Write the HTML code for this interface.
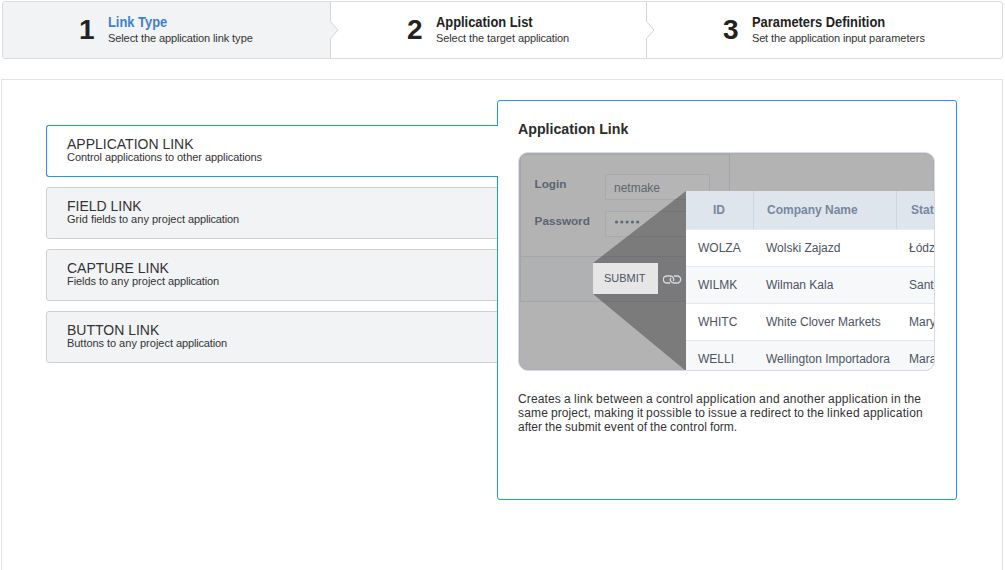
<!DOCTYPE html>
<html><head><meta charset="utf-8">
<style>
*{box-sizing:border-box;margin:0;padding:0}
html,body{width:1005px;height:570px;overflow:hidden;background:#fff;font-family:"Liberation Sans",sans-serif;color:#333}
.abs{position:absolute}
.t{position:absolute;white-space:nowrap;line-height:1}
#stepper{left:2px;top:1px;width:1001px;height:58px;border:1px solid #dcdcdc;border-radius:3px;overflow:hidden;background:#fff}
#s1bg{left:0;top:0;width:328px;height:56px;background:#f2f3f5}
.num{font-size:28px;font-weight:bold;color:#222}
.stt{font-size:14px;font-weight:bold;color:#222;transform:scaleX(0.92);transform-origin:0 0}
.sst{font-size:11px;color:#333}
#lower{left:1px;top:79px;width:1002px;height:520px;border:1px solid #e3e3e3}
.card{position:absolute;left:46px;width:456px;height:52px;border:1px solid #cfcfcf;border-radius:3px;background:#f2f3f5}
.card.act{width:452px;background:#fff;border-color:#2196f3;border-right:none;border-radius:3px 0 0 3px;z-index:3}
.ct{font-size:14px;color:#333}
.cs{font-size:11px;color:#333}
#panel{left:497px;top:100px;width:460px;height:400px;border:1px solid #2196f3;border-radius:3px;background:#fff;z-index:2}
#img{left:518px;top:152px;width:417px;height:219px;border-radius:10px;overflow:hidden;background:#b3b3b3;z-index:4;border:1px solid #d5dbe4}
.ilab{font-size:11.7px;font-weight:bold;color:#5a6473}
.inp{width:105px;height:26px;border:1px solid #a6aab0;background:#b5b5b6}
.th{font-size:12px;font-weight:bold;color:#77879e}
.td{font-size:12px;color:#4c5462}
.row{left:0;width:260px;height:37px;border-bottom:1px solid #e3e7ee}
#desc{left:518px;top:392px;width:420px;height:50px;font-size:12px;line-height:14px;color:#333;z-index:4}
#desc span{position:absolute;white-space:nowrap}
</style></head><body>
<!-- stepper -->
<div id="stepper" class="abs">
  <div id="s1bg" class="abs"></div>
  <svg class="abs" style="left:0;top:0" width="1001" height="58">
    <path d="M327.5 19.5 L335 28 L327.5 36.5 Z" fill="#f2f3f5"/>
    <path d="M327.5 0 V19.5 L335 28 L327.5 36.5 V58" fill="none" stroke="#d4d4d4" stroke-width="1"/>
    <path d="M643.5 0 V19.5 L651 28 L643.5 36.5 V58" fill="none" stroke="#d4d4d4" stroke-width="1"/>
  </svg>
  <div class="t num" style="left:76px;top:14px">1</div>
  <div class="t stt" style="left:105px;top:13px;color:#3f80d0">Link Type</div>
  <div class="t sst" style="left:105px;top:31px"><span style="position:absolute;left:0px;top:0;letter-spacing:-0.095px">Select</span><span style="position:absolute;left:33px;top:0;letter-spacing:-0.097px">the</span><span style="position:absolute;left:51px;top:0;letter-spacing:-0.145px">application</span><span style="position:absolute;left:105px;top:0;letter-spacing:-0.126px">link</span><span style="position:absolute;left:124px;top:0;letter-spacing:0.052px">type</span></div>
  <div class="t num" style="left:404px;top:14px">2</div>
  <div class="t stt" style="left:433px;top:13px">Application List</div>
  <div class="t sst" style="left:433px;top:31px"><span style="position:absolute;left:0px;top:0;letter-spacing:-0.095px">Select</span><span style="position:absolute;left:33px;top:0;letter-spacing:-0.097px">the</span><span style="position:absolute;left:51px;top:0;letter-spacing:-0.021px">target</span><span style="position:absolute;left:82px;top:0;letter-spacing:-0.145px">application</span></div>
  <div class="t num" style="left:720px;top:14px">3</div>
  <div class="t stt" style="left:749px;top:13px">Parameters Definition</div>
  <div class="t sst" style="left:749px;top:31px"><span style="position:absolute;left:0px;top:0;letter-spacing:-0.170px">Set</span><span style="position:absolute;left:19px;top:0;letter-spacing:-0.097px">the</span><span style="position:absolute;left:37px;top:0;letter-spacing:-0.145px">application</span><span style="position:absolute;left:91px;top:0;letter-spacing:-0.171px">input</span><span style="position:absolute;left:117px;top:0;letter-spacing:0.037px">parameters</span></div>
</div>

<div id="lower" class="abs"></div>

<div class="card act" style="top:125px">
  <div class="t ct" style="left:20px;top:11px">APPLICATION LINK</div>
  <div class="t cs" style="left:20px;top:26px"><span style="position:absolute;left:0px;top:0;letter-spacing:-0.066px">Control</span><span style="position:absolute;left:38px;top:0;letter-spacing:-0.091px">applications</span><span style="position:absolute;left:98px;top:0;letter-spacing:-0.087px">to</span><span style="position:absolute;left:110px;top:0;letter-spacing:-0.014px">other</span><span style="position:absolute;left:138px;top:0;letter-spacing:-0.091px">applications</span></div>
</div>
<div class="card" style="top:187px">
  <div class="t ct" style="left:20px;top:11px">FIELD LINK</div>
  <div class="t cs" style="left:20px;top:26px"><span style="position:absolute;left:0px;top:0;letter-spacing:0.055px">Grid</span><span style="position:absolute;left:24px;top:0;letter-spacing:-0.113px">fields</span><span style="position:absolute;left:52px;top:0;letter-spacing:-0.087px">to</span><span style="position:absolute;left:64px;top:0;letter-spacing:0.088px">any</span><span style="position:absolute;left:85px;top:0;letter-spacing:-0.002px">project</span><span style="position:absolute;left:121px;top:0;letter-spacing:-0.145px">application</span></div>
</div>
<div class="card" style="top:249px">
  <div class="t ct" style="left:20px;top:11px">CAPTURE LINK</div>
  <div class="t cs" style="left:20px;top:26px"><span style="position:absolute;left:0px;top:0;letter-spacing:-0.057px">Fields</span><span style="position:absolute;left:32px;top:0;letter-spacing:-0.087px">to</span><span style="position:absolute;left:44px;top:0;letter-spacing:0.088px">any</span><span style="position:absolute;left:65px;top:0;letter-spacing:-0.002px">project</span><span style="position:absolute;left:101px;top:0;letter-spacing:-0.145px">application</span></div>
</div>
<div class="card" style="top:311px">
  <div class="t ct" style="left:20px;top:11px">BUTTON LINK</div>
  <div class="t cs" style="left:20px;top:26px"><span style="position:absolute;left:0px;top:0;letter-spacing:-0.043px">Buttons</span><span style="position:absolute;left:40px;top:0;letter-spacing:-0.087px">to</span><span style="position:absolute;left:52px;top:0;letter-spacing:0.088px">any</span><span style="position:absolute;left:73px;top:0;letter-spacing:-0.002px">project</span><span style="position:absolute;left:109px;top:0;letter-spacing:-0.145px">application</span></div>
</div>

<div id="panel" class="abs">
  <div class="t" style="left:20px;top:20px;font-size:15.5px;font-weight:bold;color:#2b2b2b;transform:scaleX(0.915);transform-origin:0 0">Application Link</div>
</div>

<div id="img" class="abs">
  <div class="abs" style="left:0;top:0;width:415px;height:217px;border:1px solid #abadb1;border-radius:9px"></div>
  <div class="abs" style="left:1px;top:1px;width:210px;height:148px;border:1px solid #a3a7ad;background:#b3b3b3"></div>
  <div class="abs" style="left:1px;top:103px;width:210px;height:46px;border:1px solid #a3a7ad;background:#b0b1b3"></div>
  <div class="t ilab" style="left:15.6px;top:24.5px">Login</div>
  <div class="abs inp" style="left:86px;top:21px"></div>
  <div class="t" style="left:95px;top:29px;font-size:12px;color:#60656e">netmake</div>
  <div class="t ilab" style="left:15.6px;top:61.5px">Password</div>
  <div class="abs inp" style="left:86px;top:58px"></div>
  <svg class="abs" style="left:94.6px;top:65.6px" width="28" height="6"><circle cx="2.5" cy="3" r="1.55" fill="#5d6775"/><circle cx="7.8" cy="3" r="1.55" fill="#5d6775"/><circle cx="13.1" cy="3" r="1.55" fill="#5d6775"/><circle cx="18.4" cy="3" r="1.55" fill="#5d6775"/><circle cx="23.7" cy="3" r="1.55" fill="#5d6775"/></svg>
  <svg class="abs" style="left:0;top:0" width="416" height="218"><polygon points="74,110 167,38 167,218 74,141" fill="rgba(0,0,0,0.315)"/></svg>
  <div class="abs" style="left:74px;top:110px;width:65px;height:31px;background:#e6e6e6"></div>
  <div class="t" style="left:85px;top:120px;font-size:11px;color:#4b5563">SUBMIT</div>
  <svg class="abs" style="left:144px;top:121.5px" width="20" height="10"><path d="M7.2 8 H3.8 A3.5 3.5 0 0 1 3.8 1 H7.2 A3.5 3.5 0 0 1 10.23 6.25" fill="none" stroke="#d5dae1" stroke-width="1.3"/><path d="M10.8 1 H14.2 A3.5 3.5 0 0 1 14.2 8 H10.8 A3.5 3.5 0 0 1 7.77 2.75" fill="none" stroke="#d5dae1" stroke-width="1.3"/></svg>
  <div class="abs" id="tbl" style="left:167px;top:38px;width:260px;height:190px;background:#fff">
    <div class="abs" style="left:0;top:0;width:260px;height:39px;background:#dfe5ed;border-bottom:1px solid #e8ecf1"></div>
    <div class="abs" style="left:67px;top:0;width:1px;height:38px;background:#cdd5e0"></div>
    <div class="abs" style="left:210px;top:0;width:1px;height:38px;background:#cdd5e0"></div>
    <div class="t th" style="left:27px;top:13px">ID</div>
    <div class="t th" style="left:81px;top:13px">Company Name</div>
    <div class="t th" style="left:225px;top:13px">State</div>
    <div class="abs row" style="top:39px;background:#fff"></div>
    <div class="abs row" style="top:76px;background:#f7f8fa"></div>
    <div class="abs row" style="top:113px;background:#fff"></div>
    <div class="abs row" style="top:150px;background:#f7f8fa"></div>
    <div class="t td" style="left:12px;top:51px">WOLZA</div>
    <div class="t td" style="left:80px;top:51px">Wolski Zajazd</div>
    <div class="t td" style="left:223px;top:51px">Łódz</div>
    <div class="t td" style="left:12px;top:88px">WILMK</div>
    <div class="t td" style="left:80px;top:88px">Wilman Kala</div>
    <div class="t td" style="left:223px;top:88px">Santos</div>
    <div class="t td" style="left:12px;top:125px">WHITC</div>
    <div class="t td" style="left:80px;top:125px">White Clover Markets</div>
    <div class="t td" style="left:223px;top:125px">Maryland</div>
    <div class="t td" style="left:12px;top:162px">WELLI</div>
    <div class="t td" style="left:80px;top:162px">Wellington Importadora</div>
    <div class="t td" style="left:223px;top:162px">Maranhao</div>
  </div>
  
</div>

<div id="desc" class="abs"><span style="left:0px;top:0px;letter-spacing:0.140px">Creates</span><span style="left:46px;top:0px;letter-spacing:0.326px">a</span><span style="left:56px;top:0px;letter-spacing:0.249px">link</span><span style="left:78px;top:0px;letter-spacing:0.233px">between</span><span style="left:128px;top:0px;letter-spacing:0.326px">a</span><span style="left:138px;top:0px;letter-spacing:0.140px">control</span><span style="left:178px;top:0px;letter-spacing:0.239px">application</span><span style="left:241px;top:0px;letter-spacing:0.326px">and</span><span style="left:265px;top:0px;letter-spacing:0.186px">another</span><span style="left:310px;top:0px;letter-spacing:0.239px">application</span><span style="left:373px;top:0px;letter-spacing:0.330px">in</span><span style="left:386px;top:0px;letter-spacing:0.106px">the</span><span style="left:0px;top:14px;letter-spacing:0.164px">same</span><span style="left:33px;top:14px;letter-spacing:0.081px">project,</span><span style="left:76px;top:14px;letter-spacing:0.219px">making</span><span style="left:119px;top:14px;letter-spacing:0.000px">it</span><span style="left:128px;top:14px;letter-spacing:0.247px">possible</span><span style="left:177px;top:14px;letter-spacing:-0.004px">to</span><span style="left:190px;top:14px;letter-spacing:0.197px">issue</span><span style="left:222px;top:14px;letter-spacing:0.326px">a</span><span style="left:232px;top:14px;letter-spacing:0.123px">redirect</span><span style="left:276px;top:14px;letter-spacing:-0.004px">to</span><span style="left:289px;top:14px;letter-spacing:0.106px">the</span><span style="left:309px;top:14px;letter-spacing:0.274px">linked</span><span style="left:345px;top:14px;letter-spacing:0.239px">application</span><span style="left:0px;top:28px;letter-spacing:-0.002px">after</span><span style="left:27px;top:28px;letter-spacing:0.106px">the</span><span style="left:47px;top:28px;letter-spacing:0.109px">submit</span><span style="left:86px;top:28px;letter-spacing:0.129px">event</span><span style="left:119px;top:28px;letter-spacing:-0.004px">of</span><span style="left:132px;top:28px;letter-spacing:0.106px">the</span><span style="left:152px;top:28px;letter-spacing:0.140px">control</span><span style="left:192px;top:28px;letter-spacing:-0.067px">form.</span></div>
</body></html>
